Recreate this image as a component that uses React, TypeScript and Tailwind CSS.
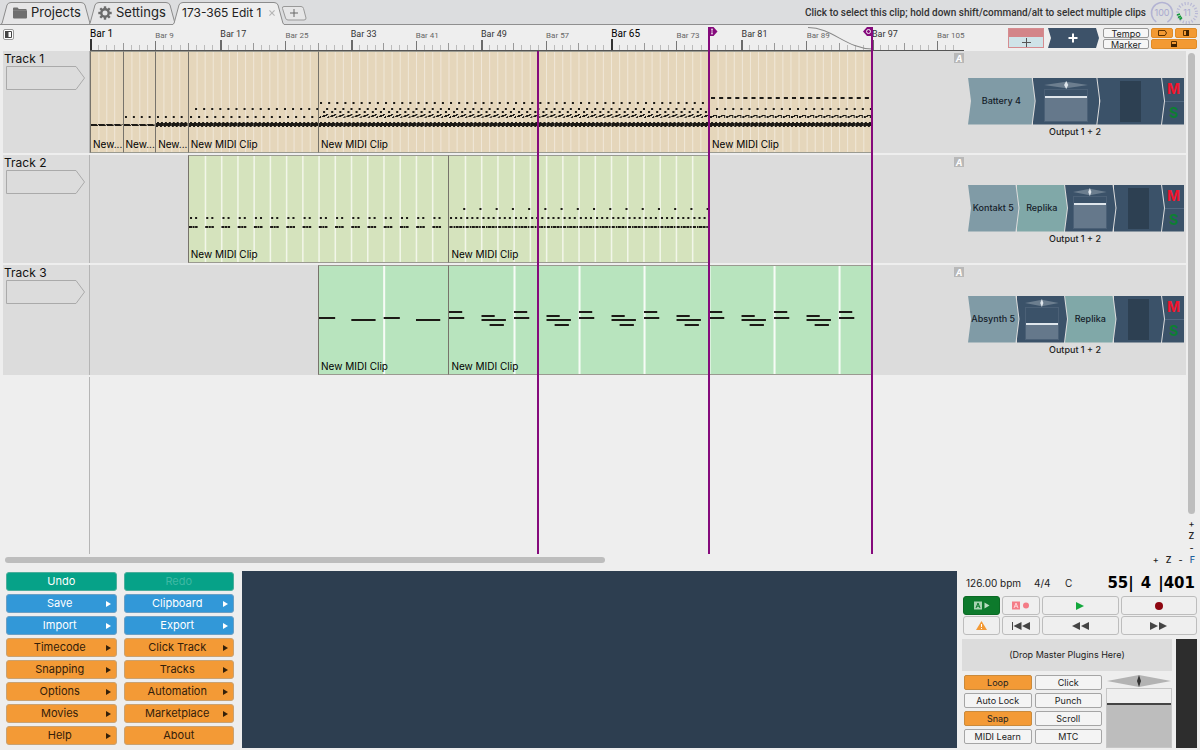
import { useState, type ReactNode } from 'react';
import { clsx } from 'clsx';

// The visible part of the edit, measured in bars
const VIEW_BARS = 107.3;
const UNIT = 8; // svg units per bar

// x, y, width, height; x is counted from the start of each repeat
type Note = [number, number, number, number];

interface ClipData {
  name: string;
  bars: number;
  period: number;
  notes: Note[];
}

interface RackItem {
  kind: 'plugin' | 'effect' | 'fader' | 'meter';
  name?: string;
  level?: 'high' | 'low';
}

interface TrackData {
  name: string;
  height: string;
  clipColor: string;
  stripeColor: string;
  stripeEvery: number;
  stripeWidth: number;
  start: number;
  clips: ClipData[];
  rack: RackItem[];
}

const hats: Note[] = [[0, 72, 6, 2], [7, 72, 1, 1], [1, 73, 6, 1]];
const kick: Note[] = [[0, 71, 8, 3], [1, 70, 2, 1], [5, 70, 2, 1], [0, 74, 2, 1], [4, 74, 2, 1]];
const snare: Note[] = [[1, 64, 2, 2]];

const tracks: TrackData[] = [
  {
    name: 'Track 1',
    height: 'h-[102px]',
    clipColor: 'bg-[#e5d6bb]',
    stripeColor: '#f0e7d8',
    stripeEvery: 1,
    stripeWidth: 1,
    start: 1,
    clips: [
      { name: 'New...', bars: 4, period: 1, notes: hats },
      { name: 'New...', bars: 4, period: 1, notes: [...hats, ...snare] },
      { name: 'New...', bars: 4, period: 1, notes: [...kick, ...snare] },
      { name: 'New MIDI Clip', bars: 16, period: 1, notes: [...kick, ...snare, [6, 56, 2, 2]] },
      {
        name: 'New MIDI Clip',
        bars: 48,
        period: 1,
        notes: [...kick, [1, 50, 2, 2], [7, 56, 2, 2], [4, 59, 2, 2], [1, 64, 1, 2], [3, 64, 3, 1], [4, 63, 4, 1], [7, 62, 2, 1], [0, 65, 1, 1]],
      },
      {
        name: 'New MIDI Clip',
        bars: 20,
        period: 1,
        notes: [...kick, [1, 45, 4, 2], [6, 56, 2, 2], [0, 64, 2, 2], [3, 63, 4, 1], [2, 64, 2, 1], [6, 64, 1, 2]],
      },
    ],
    rack: [{ kind: 'plugin', name: 'Battery 4' }, { kind: 'fader', level: 'high' }, { kind: 'meter' }],
  },
  {
    name: 'Track 2',
    height: 'h-[108px]',
    clipColor: 'bg-[#d5e3bd]',
    stripeColor: '#f2f6e9',
    stripeEvery: 2,
    stripeWidth: 1.5,
    start: 13,
    clips: [
      {
        name: 'New MIDI Clip',
        bars: 32,
        period: 2,
        notes: [[1, 61, 2, 2], [6, 61, 2, 2], [0, 70, 3, 2], [3.5, 70, 2, 2], [6, 70, 2.5, 2]],
      },
      {
        name: 'New MIDI Clip',
        bars: 32,
        period: 2,
        notes: [[14, 52, 2, 2], [1, 61, 2, 2], [6, 61, 2, 2], [11, 61, 2, 2], [0.5, 70, 3, 2], [4.5, 70, 1.5, 2], [6.5, 70, 3, 2], [10, 70, 3, 2], [13.7, 70, 1.5, 2]],
      },
    ],
    rack: [{ kind: 'plugin', name: 'Kontakt 5' }, { kind: 'effect', name: 'Replika' }, { kind: 'fader', level: 'high' }, { kind: 'meter' }],
  },
  {
    name: 'Track 3',
    height: 'h-[110px]',
    clipColor: 'bg-[#b8e4be]',
    stripeColor: '#f6fbf6',
    stripeEvery: 8,
    stripeWidth: 2,
    start: 29,
    clips: [
      { name: 'New MIDI Clip', bars: 16, period: 8, notes: [[0, 51, 16, 2], [32, 53, 24, 2]] },
      {
        name: 'New MIDI Clip',
        bars: 52,
        period: 8,
        notes: [[0, 45, 13, 2], [0, 51, 15, 2], [32, 49, 13, 2], [32, 53, 24, 2], [40, 58, 14, 2]],
      },
    ],
    rack: [{ kind: 'plugin', name: 'Absynth 5' }, { kind: 'fader', level: 'low' }, { kind: 'effect', name: 'Replika' }, { kind: 'meter' }],
  },
];

const barPercent = (bar: number) => `${((bar - 1) / VIEW_BARS) * 100}%`;
const barsWidth = (bars: number) => `${(bars / VIEW_BARS) * 100}%`;

function FolderIcon() {
  return (
    <svg width="14" height="12" viewBox="0 0 14 12" fill="#6f6f6f">
      <path d="M0 1.500Q0 .5 1 .5h3.600l1.200 1.600H12.500q1.200 0 1.200 1V4H0zM0 4h14v6.500q0 1-1 1H1Q0 11.500 0 10.500z" />
      <path d="M0 3.500h13.500" stroke="#8c8c8c" strokeWidth=".6" />
    </svg>
  );
}

function GearIcon() {
  return (
    <svg width="14" height="14" viewBox="0 0 14 14">
      <circle cx="7" cy="7" r="3.700" fill="none" stroke="#6b6b6b" strokeWidth="2.400" />
      {[0, 45, 90, 135, 180, 225, 270, 315].map((a) => (
        <rect key={a} x="5.800" y="0.300" width="2.400" height="2.600" fill="#6b6b6b" transform={`rotate(${a} 7 7)`} />
      ))}
    </svg>
  );
}

interface TabProps {
  width: number;
  className: string;
  active?: boolean;
  children: ReactNode;
}

function Tab({ width, className, active, children }: TabProps) {
  const edge = `M0 24 L1 23.500 L6 5 Q7 2.500 10 2.500 H${width - 10} Q${width - 7} 2.500 ${width - 6} 5 L${width - 1} 23.500 L${width} 24`;
  return (
    <div className={clsx('grid h-[25px] shrink-0 text-[#222]', className)}>
      <svg className="h-[25px] w-full [grid-area:1/1]" viewBox={`0 0 ${width} 25`} preserveAspectRatio="none">
        <path d={`${edge} V25 H0z`} fill={active ? '#eeeeee' : '#e6e6e7'} />
        {!active && <path d={`M0 24.500 H${width}`} stroke="#8f8f8f" />}
        <path d={edge} fill="none" stroke="#8c8c8c" />
      </svg>
      <div className="flex items-center [grid-area:1/1]">{children}</div>
    </div>
  );
}

function TopBar() {
  return (
    <header className="flex h-[25px] items-stretch bg-[#dcdddf] shadow-[inset_0_-1px_0_#8f8f8f]">
      <nav className="flex pl-px">
        <Tab width={90} className="w-[90px] text-[13px]">
          <button className="flex items-center gap-1 pl-3">
            <FolderIcon />
            Projects
          </button>
        </Tab>
        <Tab width={87} className="-ml-[2px] w-[87px] text-[13px]">
          <button className="flex items-center gap-1 pl-[9px]">
            <GearIcon />
            Settings
          </button>
        </Tab>
        <Tab width={111} className="-ml-[3px] w-[111px] text-[12px]" active>
          <button className="pl-[9px] whitespace-nowrap">173-365 Edit 1</button>
          <button aria-label="Close tab" className="pl-2">
            <svg width="6" height="6" viewBox="0 0 7 7" stroke="#b5b5b5" strokeWidth="1.300">
              <path d="M.5.5l6 6M6.500.5l-6 6" />
            </svg>
          </button>
        </Tab>
        <button aria-label="New tab" className="-ml-[3px] flex items-center">
          <svg width="26" height="16" viewBox="0 0 26 16" fill="none" stroke="#999">
            <path d="M3 1.500H20Q22 1.500 22.500 3.500L25 13Q25.200 15 23 15H7Q5 15 4.500 13L1.500 3.500Q1 1.500 3 1.500z" fill="#e6e6e7" />
            <path d="M13 4v8M9 8h8" stroke="#666" />
          </svg>
        </button>
      </nav>
      <p className="ml-auto flex items-center pr-1 font-['Roboto',sans-serif] text-[10px] font-medium whitespace-nowrap text-[#333]">
        Click to select this clip; hold down shift/command/alt to select multiple clips
      </p>
      <svg width="50" height="25" viewBox="0 0 50 25" className="shrink-0">
        <circle cx="12" cy="13" r="10.500" fill="none" stroke="#b3b3d3" strokeWidth="1.500" strokeDasharray="54 12" transform="rotate(123 12 13)" />
        <text x="12" y="16" textAnchor="middle" fontSize="9" fill="#a9a9cf">100</text>
        <circle cx="37" cy="13" r="9.500" fill="none" stroke="#b9b9d6" strokeWidth="3" strokeDasharray="1.200 1.800" />
        <path d="M27 15l3-1M28 17.500l3-1.500M29.500 19.500l2.500-2" stroke="#149a3a" strokeWidth="1.700" />
        <text x="37" y="16" textAnchor="middle" fontSize="9" fill="#a9a9cf">11</text>
      </svg>
    </header>
  );
}

function RulerTick({ bar }: { bar: number }) {
  const n = bar - 1;
  if (n % 64 === 0) return <span className="h-[11px] w-[2px] bg-[#333]" />;
  if (n % 16 === 0) return <span className="h-[10px] w-[2px] bg-[#6a6a6a]" />;
  if (n % 8 === 0) return <span className="h-[9px] w-px bg-[#777]" />;
  if (n % 4 === 0) return <span className="h-[7px] w-px bg-[#999]" />;
  return <span className="h-[5px] w-px bg-[#bbb]" />;
}

function Ruler() {
  const bars = Array.from({ length: 107 }, (_, i) => i + 1);
  const labels = bars.filter((bar) => (bar - 1) % 8 === 0);
  return (
    <div className="relative flex h-[26px] min-w-0 flex-1 flex-col">
      <div className="flex h-[14px] pt-[2px]">
        {labels.map((bar) => (
          <span
            key={bar}
            style={{ width: barsWidth(bar === 105 ? 3.3 : 8) }}
            className={clsx(
              "shrink-0 font-['Roboto',sans-serif] leading-[14px] whitespace-nowrap",
              (bar - 1) % 64 === 0
                ? 'text-[10px] text-black'
                : (bar - 1) % 16 === 0
                  ? 'text-[9px] text-[#333]'
                  : 'pt-[2px] text-[8px] text-[#666]',
            )}
          >
            Bar {bar}
          </span>
        ))}
      </div>
      <div className="flex h-[12px] items-end border-b border-[#555]">
        {bars.map((bar) => (
          <span key={bar} className="flex shrink-0 items-end" style={{ width: barsWidth(1) }}>
            <RulerTick bar={bar} />
          </span>
        ))}
      </div>
      <svg
        className="absolute bottom-0 h-6"
        style={{ left: barPercent(89), width: barsWidth(8) }}
        viewBox="0 0 65 24"
        preserveAspectRatio="none"
        fill="none"
        stroke="#888"
      >
        <path d="M1 .5C25 .5 40 22 65 22" />
      </svg>
      <svg className="absolute top-[2px] -ml-px" style={{ left: barPercent(77) }} width="10" height="24" viewBox="0 0 10 24">
        <path d="M0 0H5.500L9.500 4.500L5.500 9H2V24H0z" fill="#850a7c" />
        <path d="M3 2.200h2M4 2.200v4.600M3 6.800h2" stroke="#fff" strokeWidth=".8" />
      </svg>
      <svg className="absolute top-[2px] -ml-[9px]" style={{ left: barPercent(97) }} width="10" height="24" viewBox="0 0 10 24">
        <path d="M10 0H4L0 4.500L4 9H8V24H10z" fill="#850a7c" />
        <circle cx="5.500" cy="4.500" r="2" fill="none" stroke="#fff" strokeWidth=".9" />
      </svg>
    </div>
  );
}

function RulerRow() {
  const small = 'flex items-center justify-center rounded-[2px] border text-[9px] leading-none';
  return (
    <div className="flex h-[26px] bg-[#eee]">
      <div className="w-[90px] shrink-0 pt-1 pl-[3px]">
        <button aria-label="Toggle track list" className="flex size-[11px] items-center justify-center rounded-[2px] border border-[#999] bg-white">
          <svg width="7" height="7" viewBox="0 0 7 7">
            <path d="M.5.5h6v6h-6z" fill="#fff" stroke="#444" />
            <path d="M0 0h3.500v7H0z" fill="#444" />
          </svg>
        </button>
      </div>
      <Ruler />
      <div className="flex w-[236px] shrink-0 items-start justify-end gap-1 pt-[3px] pr-[3px]">
        <button aria-label="Add track" className="flex h-5 w-[36px] flex-col border border-[#d58c90]">
          <span className="h-2 w-full bg-[#d38589]" />
          <span className="flex w-full flex-1 items-center justify-center bg-[#cfe3e8]">
            <svg width="9" height="9" viewBox="0 0 9 9" stroke="#555">
              <path d="M4.500 0v9M0 4.500h9" />
            </svg>
          </span>
        </button>
        <button aria-label="Add plugin">
          <svg width="51" height="20" viewBox="0 0 51 20">
            <path d="M0 0H48L51 10L48 20H0L3 10z" fill="#3d5269" />
            <path d="M25 5.500v9M20.500 10h9" stroke="#fff" strokeWidth="2" />
          </svg>
        </button>
        <div className="flex w-[46px] flex-col gap-px">
          <button className={clsx(small, 'h-[10px] border-[#999] bg-[#f6f6f6] text-[#222]')}>Tempo</button>
          <button className={clsx(small, 'h-[10px] border-[#999] bg-[#f6f6f6] text-[#222]')}>Marker</button>
        </div>
        <div className="-ml-[2px] grid w-[46px] grid-cols-2 gap-x-[2px] gap-y-px">
          <button aria-label="Show tracks" className={clsx(small, 'h-[10px] border-[#e08c28] bg-[#f39a33]')}>
            <svg width="9" height="6" viewBox="0 0 9 6" fill="none" stroke="#5a3000">
              <path d="M.5.5h6.500L8.500 3L7 5.500H.5z" />
            </svg>
          </button>
          <button aria-label="Show mixer" className={clsx(small, 'h-[10px] border-[#e08c28] bg-[#f39a33]')}>
            <svg width="6" height="6" viewBox="0 0 6 6">
              <path d="M.5.5h5v5h-5z" fill="none" stroke="#5a3000" />
              <path d="M3 0h3v6H3z" fill="#402200" />
            </svg>
          </button>
          <button aria-label="Show controls" className={clsx(small, 'col-span-2 h-[10px] border-[#e08c28] bg-[#f39a33]')}>
            <svg width="6" height="6" viewBox="0 0 6 6">
              <path d="M.5.5h5v5h-5z" fill="none" stroke="#5a3000" />
              <path d="M0 3h6v3H0z" fill="#402200" />
            </svg>
          </button>
        </div>
      </div>
    </div>
  );
}

function Clip({ clip, track }: { clip: ClipData; track: TrackData }) {
  const repeats = Math.ceil(clip.bars / clip.period);
  const width = clip.bars * UNIT;
  const stripes = Math.ceil(clip.bars / track.stripeEvery) - 1;
  return (
    <div
      className={clsx(
        'grid min-h-0 shrink-0 grid-rows-[minmax(0,1fr)] overflow-hidden border-y border-l border-y-[#9a9a90] border-l-[#77736b]',
        track.clipColor,
      )}
      style={{ width: barsWidth(clip.bars) }}
    >
      <svg className="h-full w-full [grid-area:1/1]" viewBox={`0 0 ${width} 100`} preserveAspectRatio="none" fill={track.stripeColor}>
        {Array.from({ length: stripes }, (_, i) => (
          <rect key={i} x={(i + 1) * track.stripeEvery * UNIT - 0.5} y="0" width={track.stripeWidth} height="100" />
        ))}
      </svg>
      <svg className="h-[85px] w-full [grid-area:1/1]" viewBox={`0 0 ${width} 85`} preserveAspectRatio="none" fill="#1c1a16">
        {Array.from({ length: repeats }, (_, r) =>
          clip.notes.map(([x, y, w, h], i) => <rect key={`${r}-${i}`} x={r * clip.period * UNIT + x} y={y} width={w} height={h} />),
        )}
      </svg>
      <span className="self-end overflow-hidden pl-[2px] text-[10px] leading-[16px] whitespace-nowrap text-black [grid-area:1/1]">{clip.name}</span>
    </div>
  );
}

function PanKnob() {
  return (
    <svg className="w-full" height="8" viewBox="0 0 64 12" preserveAspectRatio="none">
      <path d="M0 6L32 1L64 6L32 11z" fill="#6c7e8f" />
      <path d="M32 0L35 6L32 12L29 6z" fill="#dfe6ec" />
    </svg>
  );
}

const blockShape =
  '[clip-path:polygon(0_0,calc(100%-3px)_0,100%_50%,calc(100%-3px)_100%,0_100%,3px_50%)]';

function RackBlock({ item }: { item: RackItem }) {
  const base = clsx('flex h-[47px] flex-1 items-center justify-center', blockShape);
  if (item.kind === 'plugin' || item.kind === 'effect') {
    return (
      <button
        className={clsx(base, 'text-[9px] font-medium whitespace-nowrap text-[#15202a]', item.kind === 'plugin' ? 'bg-[#809ba6]' : 'bg-[#80a8a8]')}
      >
        {item.name}
      </button>
    );
  }
  if (item.kind === 'meter') {
    return (
      <div className={clsx(base, 'bg-[#3b5269]')}>
        <div className="h-[41px] w-[21px] bg-[#2d4052]" />
      </div>
    );
  }
  return (
    <div className={clsx(base, 'flex-col bg-[#3b5269]')}>
      <div className="w-2/3">
        <PanKnob />
      </div>
      <div className="flex h-[33px] w-2/3 flex-col justify-end border border-[#4b6076]">
        <div className={clsx('border-t-2 border-[#dfe6ec] bg-[#65788b]', item.level === 'high' ? 'h-[25px]' : 'h-[16px]')} />
      </div>
    </div>
  );
}

function Rack({ items }: { items: RackItem[] }) {
  return (
    <div className="flex w-[222px] shrink-0 flex-col justify-center pt-[12px] pr-[2px] pl-1">
      <div className="flex -space-x-[2px]">
        {items.map((item, i) => (
          <RackBlock key={i} item={item} />
        ))}
        <div className="flex h-[47px] w-[22px] flex-col bg-[#3b5269] pl-px text-[14px] leading-none font-bold [clip-path:polygon(0_0,100%_0,100%_100%,0_100%,3px_50%)]">
          <button aria-label="Mute" className="flex-1 border-b border-[#526880] text-[#f5142c]">M</button>
          <button aria-label="Solo" className="flex-1 text-[#0c7f32]">S</button>
        </div>
      </div>
      <p className="h-[14px] pr-[2px] text-center text-[9px] leading-[14px] font-medium text-[#222]">Output 1 + 2</p>
    </div>
  );
}

function TrackRow({ track }: { track: TrackData }) {
  return (
    <section className={clsx('flex bg-[#dcdcdc]', track.height)}>
      <div className="w-[87px] shrink-0 border-r border-[#b5b5b5] pl-px">
        <h2 className="h-[15px] text-[12px] leading-[16px] text-[#111]">{track.name}</h2>
        <svg className="ml-[2px]" width="79" height="24" viewBox="0 0 79 24" fill="none" stroke="#aaa">
          <path d="M.5.5H70L78.500 12L70 23.500H.5z" />
        </svg>
      </div>
      <div className="grid min-w-0 flex-1 grid-rows-[minmax(0,1fr)]">
        <div className="flex min-h-0 min-w-0 [grid-area:1/1]">
          <div className="shrink-0" style={{ width: barPercent(track.start) }} />
          {track.clips.map((clip, i) => (
            <Clip key={i} clip={clip} track={track} />
          ))}
        </div>
        <button
          aria-label={`${track.name} automation`}
          className="mt-[2px] flex h-[10px] w-[10px] items-center justify-center justify-self-end bg-[#b8b8b8] text-[9px] leading-none font-bold text-white italic [grid-area:1/1]"
        >
          A
        </button>
      </div>
      <Rack items={track.rack} />
    </section>
  );
}

function Arrangement() {
  return (
    <main className="flex flex-1 bg-[#eee]">
      <div className="relative flex min-w-0 flex-1 flex-col gap-[2px] pl-[3px]">
        {tracks.map((track) => (
          <TrackRow key={track.name} track={track} />
        ))}
        <div className="w-[87px] flex-1 border-r border-[#b5b5b5]" />
        <div className="pointer-events-none absolute inset-y-0 right-[222px] left-[90px]">
          {[56, 77, 97].map((bar) => (
            <div key={bar} className="absolute inset-y-0 -ml-px w-[2px] bg-[#850a7c]" style={{ left: barPercent(bar) }} />
          ))}
        </div>
      </div>
      <div className="flex w-[14px] shrink-0 flex-col items-center pt-[2px] pr-[3px] text-[9px] leading-[12px] font-medium">
        <div className="w-[7px] flex-1 rounded-full bg-[#bdbdbd]" />
        <div className="flex flex-col pt-1">
          <button aria-label="Zoom in vertically">+</button>
          <button>Z</button>
          <button aria-label="Zoom out vertically">-</button>
        </div>
      </div>
    </main>
  );
}

function HorizontalScroll() {
  return (
    <div className="flex h-[17px] items-start justify-between px-[5px]">
      <div className="mt-[3px] h-[6px] w-[calc(50%+5px)] rounded-full bg-[#bdbdbd]" />
      <div className="flex gap-[7px] text-[9px] leading-[12px] font-medium">
        <button aria-label="Zoom in">+</button>
        <button>Z</button>
        <button aria-label="Zoom out">-</button>
        <button className="text-[#1d5f9c]">F</button>
      </div>
    </div>
  );
}

const menuColors = {
  green: 'bg-[#06a288] border-[#4cae9c] text-white',
  blue: 'bg-[#3298d8] border-[#6a9fc4] text-white',
  orange: 'bg-[#f39a36] border-[#c9a272] text-[#33200a]',
};

const menu: { label: string; color: keyof typeof menuColors; arrow?: boolean; disabled?: boolean }[] = [
  { label: 'Undo', color: 'green' },
  { label: 'Redo', color: 'green', disabled: true },
  { label: 'Save', color: 'blue', arrow: true },
  { label: 'Clipboard', color: 'blue', arrow: true },
  { label: 'Import', color: 'blue', arrow: true },
  { label: 'Export', color: 'blue', arrow: true },
  { label: 'Timecode', color: 'orange', arrow: true },
  { label: 'Click Track', color: 'orange', arrow: true },
  { label: 'Snapping', color: 'orange', arrow: true },
  { label: 'Tracks', color: 'orange', arrow: true },
  { label: 'Options', color: 'orange', arrow: true },
  { label: 'Automation', color: 'orange', arrow: true },
  { label: 'Movies', color: 'orange', arrow: true },
  { label: 'Marketplace', color: 'orange', arrow: true },
  { label: 'Help', color: 'orange', arrow: true },
  { label: 'About', color: 'orange' },
];

function MenuPanel() {
  return (
    <div className="grid w-[242px] shrink-0 grid-cols-2 content-start gap-x-[7px] gap-y-[3px] pt-px pr-2 pb-[3px] pl-[6px]">
      {menu.map((item) => (
        <button
          key={item.label}
          disabled={item.disabled}
          className={clsx('flex h-[19px] items-center rounded-[3px] border text-[11px] leading-none', menuColors[item.color])}
        >
          <span className={clsx('flex-1 text-center', item.arrow && 'pl-[7px]', item.disabled && 'text-[#3fb9a4]')}>{item.label}</span>
          {item.arrow && (
            <svg className="mr-[5px]" width="5" height="6" viewBox="0 0 5 6" fill="currentColor">
              <path d="M0 0L5 3L0 6z" />
            </svg>
          )}
        </button>
      ))}
    </div>
  );
}

function TransportButton({ label, className, children }: { label: string; className?: string; children: ReactNode }) {
  return (
    <button aria-label={label} className={clsx('flex h-[19px] items-center justify-center rounded-[3px] border', className ?? 'border-[#bdbdbd] bg-[#efefef]')}>
      {children}
    </button>
  );
}

function Transport() {
  return (
    <div className="grid grid-cols-[37px_38px_1fr_1fr] gap-x-[2px] gap-y-px pl-px">
      <TransportButton label="Automation read" className="border-[#0b6a25] bg-[#0d7a2c]">
        <svg width="16" height="9" viewBox="0 0 16 9">
          <path d="M0 .5h8v8H0z" fill="#a9d3b1" />
          <path d="M2 7L4 2L6 7M2.800 5.200h2.400" fill="none" stroke="#0d7a2c" />
          <path d="M10.500 1.500L15.500 4.500L10.500 7.500z" fill="#b9dcc0" />
        </svg>
      </TransportButton>
      <TransportButton label="Automation write">
        <svg width="18" height="9" viewBox="0 0 18 9">
          <path d="M0 .5h8v8H0z" fill="#f47c87" />
          <path d="M2 7L4 2L6 7M2.800 5.200h2.400" fill="none" stroke="#ffd5d8" />
          <circle cx="14" cy="4.500" r="3" fill="#f47c87" />
        </svg>
      </TransportButton>
      <TransportButton label="Play">
        <svg width="8" height="8" viewBox="0 0 8 8" fill="#12a83c">
          <path d="M0 0L8 4L0 8z" />
        </svg>
      </TransportButton>
      <TransportButton label="Record">
        <svg width="8" height="8" viewBox="0 0 8 8" fill="#8e0610">
          <circle cx="4" cy="4" r="4" />
        </svg>
      </TransportButton>
      <TransportButton label="Warnings">
        <svg width="11" height="9" viewBox="0 0 11 9">
          <path d="M5.500 0L11 9H0z" fill="#f39a36" />
          <path d="M5.500 3v3M5.500 7v1" stroke="#fff" />
        </svg>
      </TransportButton>
      <TransportButton label="Return to start">
        <svg width="18" height="8" viewBox="0 0 18 8" fill="#444">
          <path d="M0 0h1v8H0zM9.500 0v8L1.500 4zM18 0v8l-8-4z" />
        </svg>
      </TransportButton>
      <TransportButton label="Rewind">
        <svg width="17" height="8" viewBox="0 0 17 8" fill="#444">
          <path d="M8 0v8L0 4zM17 0v8L9 4z" />
        </svg>
      </TransportButton>
      <TransportButton label="Fast forward">
        <svg width="17" height="8" viewBox="0 0 17 8" fill="#444">
          <path d="M0 0v8l8-4zM9 0v8l8-4z" />
        </svg>
      </TransportButton>
    </div>
  );
}

const toggleNames = ['Loop', 'Click', 'Auto Lock', 'Punch', 'Snap', 'Scroll', 'MIDI Learn', 'MTC'];

function TransportPanel() {
  const [enabled, setEnabled] = useState<string[]>(['Loop', 'Snap']);

  const toggle = (name: string) => {
    setEnabled(enabled.includes(name) ? enabled.filter((n) => n !== name) : [...enabled, name]);
  };

  return (
    <div className="flex w-[243px] shrink-0 flex-col pr-[3px] pl-[5px]">
      <div className="flex h-[25px] items-center pr-[2px] pl-1 text-[10px] text-[#222]">
        <span className="w-[68px]">126.00 bpm</span>
        <span className="w-[31px]">4/4</span>
        <span>C</span>
        <span className="ml-auto flex font-['DejaVu_Sans',sans-serif] text-[15px] font-bold whitespace-pre text-black">
          <span>55|</span>
          <span className="px-[7px]">4</span>
          <span>|401</span>
        </span>
      </div>
      <Transport />
      <div className="mt-1 flex flex-1 gap-1">
        <div className="flex flex-1 flex-col">
          <div className="flex h-[32px] items-center justify-center bg-[#dcdcdc] text-[9px] text-[#222]">(Drop Master Plugins Here)</div>
          <div className="mt-1 flex flex-1 gap-1">
            <div className="grid flex-1 grid-cols-2 content-start gap-[3px] pl-[2px]">
              {toggleNames.map((name) => (
                <button
                  key={name}
                  aria-pressed={enabled.includes(name)}
                  onClick={() => toggle(name)}
                  className={clsx(
                    'h-[15px] rounded-[2px] border text-[9px] leading-none whitespace-nowrap text-[#222]',
                    enabled.includes(name) ? 'border-[#c98a3c] bg-[#f39a36]' : 'border-[#a5a5a5] bg-[#f4f4f4]',
                  )}
                >
                  {name}
                </button>
              ))}
            </div>
            <div className="flex w-[66px] flex-col">
              <svg width="66" height="12" viewBox="0 0 66 12">
                <path d="M1 6L33 0L65 6L33 12z" fill="#b3b3b3" />
                <path d="M33 0L35 6L33 12L31 6z" fill="#333" />
              </svg>
              <div className="mt-px flex flex-1 flex-col border border-[#c6c6c6] bg-[#efefef] pt-[14px]">
                <div className="flex-1 border-t-2 border-[#444] bg-[#bdbdbd]" />
              </div>
            </div>
          </div>
        </div>
        <div className="w-[21px] bg-[#2d2d2d]" />
      </div>
    </div>
  );
}

export default function App() {
  return (
    <div className="flex min-h-screen min-w-[900px] flex-col overflow-hidden bg-[#eee] font-['Inter',sans-serif] text-[#222]">
      <TopBar />
      <RulerRow />
      <Arrangement />
      <HorizontalScroll />
      <footer className="flex pb-[2px]">
        <MenuPanel />
        <div className="flex-1 bg-[#2d3e50]" />
        <TransportPanel />
      </footer>
    </div>
  );
}
